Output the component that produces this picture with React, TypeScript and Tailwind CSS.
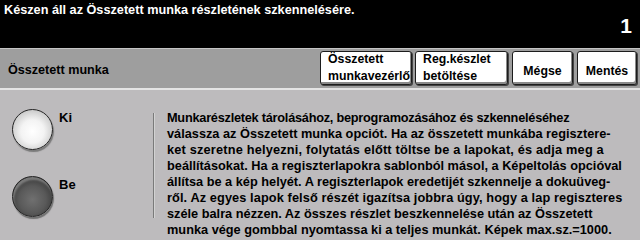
import React from "react";

// each line of the help text, with a small tracking nudge so the ragged edge lines up
const lines: { text: string; cls: string }[] = [
  { text: "Munkarészletek tárolásához, beprogramozásához és szkenneléséhez", cls: "tracking-[-0.25px]" },
  { text: "válassza az Összetett munka opciót. Ha az összetett munkába regisztere-", cls: "tracking-normal" },
  { text: "ket szeretne helyezni, folytatás előtt töltse be a lapokat, és adja meg a", cls: "tracking-[0.19px]" },
  { text: "beállításokat. Ha a regiszterlapokra sablonból másol, a Képeltolás opcióval", cls: "tracking-normal" },
  { text: "állítsa be a kép helyét. A regiszterlapok eredetijét szkennelje a dokuüveg-", cls: "tracking-normal" },
  { text: "ről. Az egyes lapok felső részét igazítsa jobbra úgy, hogy a lap regiszteres", cls: "tracking-[0.1px]" },
  { text: "széle balra nézzen. Az összes részlet beszkennelése után az Összetett", cls: "tracking-normal" },
  { text: "munka vége gombbal nyomtassa ki a teljes munkát. Képek max.sz.=1000.", cls: "tracking-normal" },
];

const ToolButton = ({ top, bottom, w }: { top: string; bottom?: string; w: string }) => (
  <button
    className={`${w} h-[34px] shrink-0 bg-white border border-[#1c1c1c] rounded-[3px] shadow-[inset_-1px_-2px_0_#8a8a8a,1px_1px_0_#444] text-[12.3px] font-bold text-black leading-[17px] flex flex-col ${
      bottom ? "items-start justify-start pl-[7px]" : "items-center justify-start pt-[11px]"
    }`}
  >
    {bottom ? (
      <span className="-mt-[1px] text-left whitespace-nowrap">
        {top}
        <br />
        {bottom}
      </span>
    ) : (
      <span>{top}</span>
    )}
  </button>
);

const Radio = ({ on, label }: { on: boolean; label: string }) => (
  <div className="flex items-start">
    <div
      className={`w-[41px] h-[41px] rounded-full border border-[#262626] ${
        on
          ? "bg-[radial-gradient(circle_at_50%_58%,#707070_0%,#595959_45%,#3c3c3c_75%,#1a1a1a_100%)] shadow-[inset_1px_3px_2px_rgba(255,255,255,0.3),1px_2px_1px_#707070]"
          : "bg-[radial-gradient(circle_at_50%_55%,#ffffff_0%,#f3f3f3_40%,#cdcdcd_72%,#7a7a7a_94%,#3a3a3a_100%)] shadow-[1px_2px_1px_#7a7a7a]"
      }`}
    />
    <span className="ml-[6px] mt-[1px] text-[13px] font-bold text-black leading-[16px]">{label}</span>
  </div>
);

export default function App() {
  return (
    <div
      className="w-[640px] h-[240px] overflow-hidden bg-[#bdbbbd] flex flex-col"
      style={{ fontFamily: '"Liberation Sans", Arial, sans-serif' }}
    >
      <div className="h-[48px] bg-black flex justify-between pl-[4px] pr-[8px] shrink-0">
        <div className="text-white font-bold text-[12.7px] pt-[1px]">
          Készen áll az Összetett munka részletének szkennelésére.
        </div>
        <div className="text-white font-bold text-[21px] pt-[10px]">1</div>
      </div>
      <div className="h-[1px] bg-[#c4c4c4] shrink-0" />
      <div className="h-[39px] bg-[#9e9e9e] flex justify-between pl-[8px] pr-[3px] shrink-0">
        <div className="text-[12.6px] font-bold text-black pt-[12px]">Összetett munka</div>
        <div className="flex pt-[2px]">
          <ToolButton top="Összetett" bottom="munkavezérlő" w="w-[92px]" />
          <div className="w-[3px]" />
          <ToolButton top="Reg.készlet" bottom="betöltése" w="w-[93px]" />
          <div className="w-[4px]" />
          <ToolButton top="Mégse" w="w-[61px]" />
          <div className="w-[4px]" />
          <ToolButton top="Mentés" w="w-[60px]" />
        </div>
      </div>
      <div className="h-[2px] bg-[#e4e4e4] shrink-0" />
      <div className="flex flex-1">
        <div className="w-[153px] shrink-0 pl-[12px] pt-[19px] flex flex-col gap-[26px]">
          <Radio on={false} label="Ki" />
          <Radio on={true} label="Be" />
        </div>
        <div className="mt-[23px] h-[105px] w-[1px] shrink-0 bg-[#7a7a7a] border-r border-[#d2d2d2] box-content" />
        <div className="pl-[12px] pt-[20px] text-[12.75px] font-bold text-black leading-[16px] whitespace-nowrap">
          {lines.map((l) => (
            <div key={l.text} className={l.cls}>
              {l.text}
            </div>
          ))}
        </div>
      </div>
    </div>
  );
}
